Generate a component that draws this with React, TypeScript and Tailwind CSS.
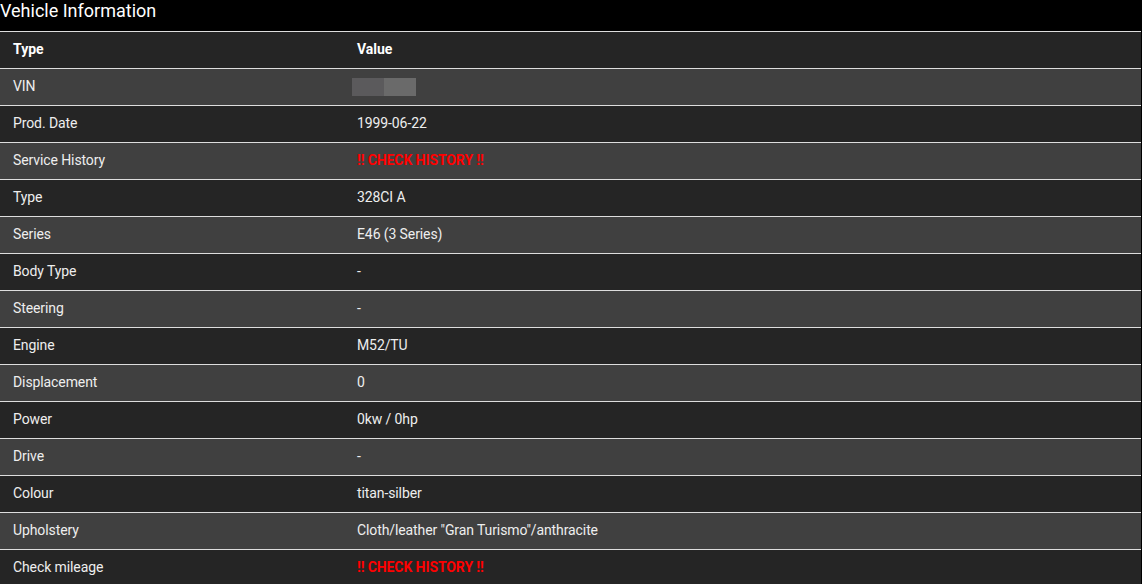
const rows: { type: string; value: string; kind?: "vin" | "warn" }[] = [
  { type: "VIN", value: "", kind: "vin" },
  { type: "Prod. Date", value: "1999-06-22" },
  { type: "Service History", value: "!! CHECK HISTORY !!", kind: "warn" },
  { type: "Type", value: "328CI A" },
  { type: "Series", value: "E46 (3 Series)" },
  { type: "Body Type", value: "-" },
  { type: "Steering", value: "-" },
  { type: "Engine", value: "M52/TU" },
  { type: "Displacement", value: "0" },
  { type: "Power", value: "0kw / 0hp" },
  { type: "Drive", value: "-" },
  { type: "Colour", value: "titan-silber" },
  { type: "Upholstery", value: 'Cloth/leather "Gran Turismo"/anthracite' },
  { type: "Check mileage", value: "!! CHECK HISTORY !!", kind: "warn" },
];

export default function App() {
  return (
    <div className="min-h-[584px] w-[1142px] bg-black font-['Roboto',sans-serif] text-[#eeeeee]">
      {/* Title */}
      <h2 className="h-[31px] text-[18px] leading-[22px] text-white">Vehicle Information</h2>

      {/* Table */}
      <div className="w-[1141px]">
        <div className="flex h-[37px] items-center border-t border-[#dedede] bg-[#252525] pb-[2px] text-[14px] font-bold text-white">
          <div className="w-[344px] pl-[13px]">Type</div>
          <div className="flex-1 pl-[13px]">Value</div>
        </div>
        {rows.map((row, i) => (
          <div
            key={row.type + i}
            className={`flex h-[37px] items-center border-t border-[#dedede] pb-[2px] text-[14px] tracking-[-0.1px] ${
              i % 2 === 0 ? "bg-[#404040]" : "bg-[#252525]"
            }`}
          >
            <div className="w-[344px] pl-[13px]">{row.type}</div>
            <div className="flex-1 pl-[13px]">
              {row.kind === "vin" ? (
                <div className="-ml-[5px] mt-[1px] flex h-[18px]">
                  <div className="w-[32px] bg-[#5b5a5c]" />
                  <div className="w-[32px] bg-[#6a6a6a]" />
                </div>
              ) : row.kind === "warn" ? (
                <span className="font-bold text-[#ff0000]">{row.value}</span>
              ) : (
                row.value
              )}
            </div>
          </div>
        ))}
      </div>
    </div>
  );
}
